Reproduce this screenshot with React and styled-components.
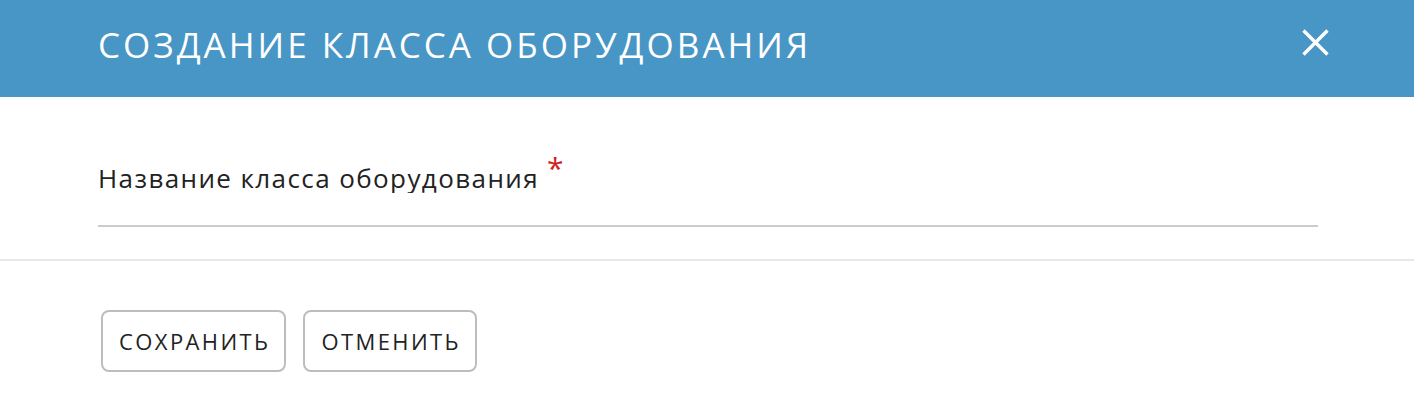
import React from 'react'
import styled, { createGlobalStyle } from 'styled-components'

const Global = createGlobalStyle`
  html, body { margin: 0; padding: 0; background: #fff; }
  body { font-family: "Open Sans", Lato, sans-serif; }
`

function App() {
  return (
    <>
      <Global />
      <Dialog>
        <Header>
          <Title>СОЗДАНИЕ КЛАССА ОБОРУДОВАНИЯ</Title>
          <CloseButton aria-label="Закрыть">
            <svg width="27" height="27" viewBox="0 0 27 27">
              <path d="M1.5 1.5 L25.5 25.5 M25.5 1.5 L1.5 25.5" stroke="#fff" strokeWidth="3.4" />
            </svg>
          </CloseButton>
        </Header>
        <Body>
          <Field>
            <Label>
              Название класса оборудования<Required>*</Required>
            </Label>
            <Input type="text" />
          </Field>
        </Body>
        <Footer>
          <Button>СОХРАНИТЬ</Button>
          <Button>ОТМЕНИТЬ</Button>
        </Footer>
      </Dialog>
    </>
  )
}
export default App

const Dialog = styled.div`
  width: 100%;
  background: #fff;
`
const Header = styled.div`
  height: 97px;
  background: #4896c5;
  display: flex;
  align-items: center;
  justify-content: space-between;
  padding: 0 85px 9px 98px;
  box-sizing: border-box;
`
const Title = styled.h2`
  margin: 0;
  color: #fff;
  font-weight: 400;
  font-size: 35px;
  letter-spacing: 3px;
`
const CloseButton = styled.button`
  background: none;
  border: none;
  padding: 0;
  margin-bottom: 3px;
  display: flex;
  cursor: pointer;
`
const Body = styled.div`
  padding: 65px 96px 32px 98px;
  border-bottom: 2px solid #e8e8e8;
`
const Field = styled.div`
  display: flex;
  flex-direction: column;
`
const Label = styled.label`
  font-size: 26px;
  line-height: 30px;
  letter-spacing: 1.4px;
  color: #222;
`
const Required = styled.span`
  color: #d0201a;
  font-size: 30px;
  margin-left: 8px;
  position: relative;
  top: -9px;
`
const Input = styled.input`
  border: none;
  border-bottom: 2px solid #cccccc;
  height: 34px;
  box-sizing: border-box;
  outline: none;
  font-size: 22px;
  padding: 0;
`
const Footer = styled.div`
  display: flex;
  gap: 17px;
  padding: 49px 0 0 101px;
`
const Button = styled.button`
  height: 62px;
  padding: 0 14px 0 16px;
  border: 2px solid #bdbdbd;
  border-radius: 8px;
  background: #fff;
  font-family: "Open Sans", Lato, sans-serif;
  font-size: 22px;
  letter-spacing: 2.4px;
  color: #222;
  cursor: pointer;
`
